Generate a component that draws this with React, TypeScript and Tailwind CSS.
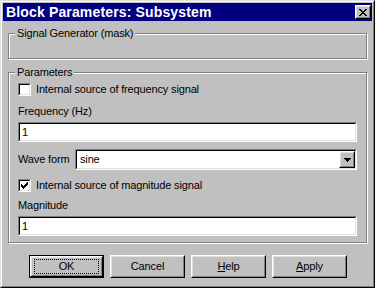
import type { ReactNode } from "react";

const raised =
  "border border-t-white border-l-white border-r-black border-b-black bg-[#c0c0c0]";
const raisedInner =
  "border border-t-[#dfdfdf] border-l-[#dfdfdf] border-r-[#808080] border-b-[#808080]";

function Pixels({ rows, className }: { rows: string[]; className?: string }) {
  const w = rows[0].length;
  const h = rows.length;
  return (
    <svg width={w} height={h} viewBox={`0 0 ${w} ${h}`} shapeRendering="crispEdges" className={className}>
      {rows.map((r, y) =>
        r.split("").map((c, x) => (c === "X" ? <rect key={`${x}-${y}`} x={x} y={y} width={1} height={1} fill="#000" /> : null))
      )}
    </svg>
  );
}

function Sunken({ className, children }: { className?: string; children?: ReactNode }) {
  return (
    <div className={`border border-t-[#808080] border-l-[#808080] border-r-white border-b-white ${className ?? ""}`}>
      <div className="flex h-full border border-t-black border-l-black border-r-[#dfdfdf] border-b-[#dfdfdf] bg-white">
        {children}
      </div>
    </div>
  );
}

function Checkbox({ checked, label }: { checked?: boolean; label: string }) {
  return (
    <div className="flex h-[13px] items-center gap-[5px]">
      <Sunken className="h-[13px] w-[13px] shrink-0">
        <div className="pl-px pt-px">
          {checked && <Pixels rows={["......X", ".....XX", "X...XXX", "XX.XXX.", "XXXXX..", ".XXX...", "..X...."]} />}
        </div>
      </Sunken>
      <span className="leading-[13px]">{label}</span>
    </div>
  );
}

function Field({ value }: { value: string }) {
  return (
    <Sunken className="h-[20px]">
      <span className="pl-[2px] leading-[16px]">{value}</span>
    </Sunken>
  );
}

function Group({ label, className, children }: { label: string; className?: string; children?: ReactNode }) {
  return (
    <div className={`relative mx-[5px] border border-[#808080] shadow-[inset_1px_1px_0_white,1px_1px_0_white] ${className ?? ""}`}>
      <span className="absolute -top-[7px] left-[6px] bg-[#c0c0c0] px-[2px] leading-[13px]">{label}</span>
      {children}
    </div>
  );
}

function Button({ children, isDefault }: { children: ReactNode; isDefault?: boolean }) {
  const face = (
    <div className={`h-full ${raised}`}>
      <div className={`flex h-full items-center justify-center ${raisedInner}`}>
        {isDefault ? (
          <div className="flex h-[15px] w-[65px] items-center justify-center border border-dotted border-black">{children}</div>
        ) : (
          children
        )}
      </div>
    </div>
  );
  return isDefault ? (
    <div className="h-[23px] w-[75px] border border-black">{face}</div>
  ) : (
    <div className="h-[23px] w-[75px]">{face}</div>
  );
}

export default function App() {
  return (
    <div className="h-[288px] w-[375px] border border-t-[#dfdfdf] border-l-[#dfdfdf] border-r-black border-b-black bg-[#c0c0c0] font-['Liberation_Sans',Arial,sans-serif] text-[11px] tracking-[-0.15px] text-black">
      <div className="flex h-full flex-col border border-t-white border-l-white border-r-[#808080] border-b-[#808080] p-px">
        {/* title bar */}
        <div className="flex h-[18px] items-center justify-between bg-[#000080] pl-[3px] pr-[1px]">
          <span className="text-[14px] font-bold leading-[18px] tracking-[0.15px] text-white">Block Parameters: Subsystem</span>
          <div className={`h-[14px] w-[16px] ${raised}`}>
            <div className={`flex h-full items-center justify-center ${raisedInner}`}>
              <Pixels rows={["XX....XX", ".XX..XX.", "..XXXX..", "...XX...", "..XXXX..", ".XX..XX.", "XX....XX"]} />
            </div>
          </div>
        </div>

        <Group label="Signal Generator (mask)" className="mt-[12px] h-[26px]" />

        <Group label="Parameters" className="mt-[13px] h-[171px]">
          <div className="flex flex-col pl-[9px] pr-[9px]">
            <div className="mt-[10px]">
              <Checkbox label="Internal source of frequency signal" />
            </div>
            <div className="mt-[9px] h-[13px] leading-[13px]">Frequency (Hz)</div>
            <div className="mt-[4px]">
              <Field value="1" />
            </div>
            <div className="mt-[7px] flex h-[21px] items-center">
              <span className="w-[57px] shrink-0 leading-[13px]">Wave form</span>
              <Sunken className="h-[21px] flex-1">
                <span className="flex-1 pl-[3px] leading-[17px]">sine</span>
                <div className={`h-[17px] w-[16px] ${raised}`}>
                  <div className={`flex h-full items-center justify-center ${raisedInner}`}>
                    <Pixels rows={["XXXXXXX", ".XXXXX.", "..XXX..", "...X..."]} />
                  </div>
                </div>
              </Sunken>
            </div>
            <div className="mt-[9px]">
              <Checkbox checked label="Internal source of magnitude signal" />
            </div>
            <div className="mt-[7px] h-[13px] leading-[13px]">Magnitude</div>
            <div className="mt-[4px]">
              <Field value="1" />
            </div>
          </div>
        </Group>

        <div className="mt-[12px] flex gap-[6px] pl-[26px]">
          <Button isDefault>OK</Button>
          <Button>Cancel</Button>
          <Button>
            <span>
              <span className="underline underline-offset-1">H</span>elp
            </span>
          </Button>
          <Button>
            <span>
              <span className="underline underline-offset-1">A</span>pply
            </span>
          </Button>
        </div>
      </div>
    </div>
  );
}
